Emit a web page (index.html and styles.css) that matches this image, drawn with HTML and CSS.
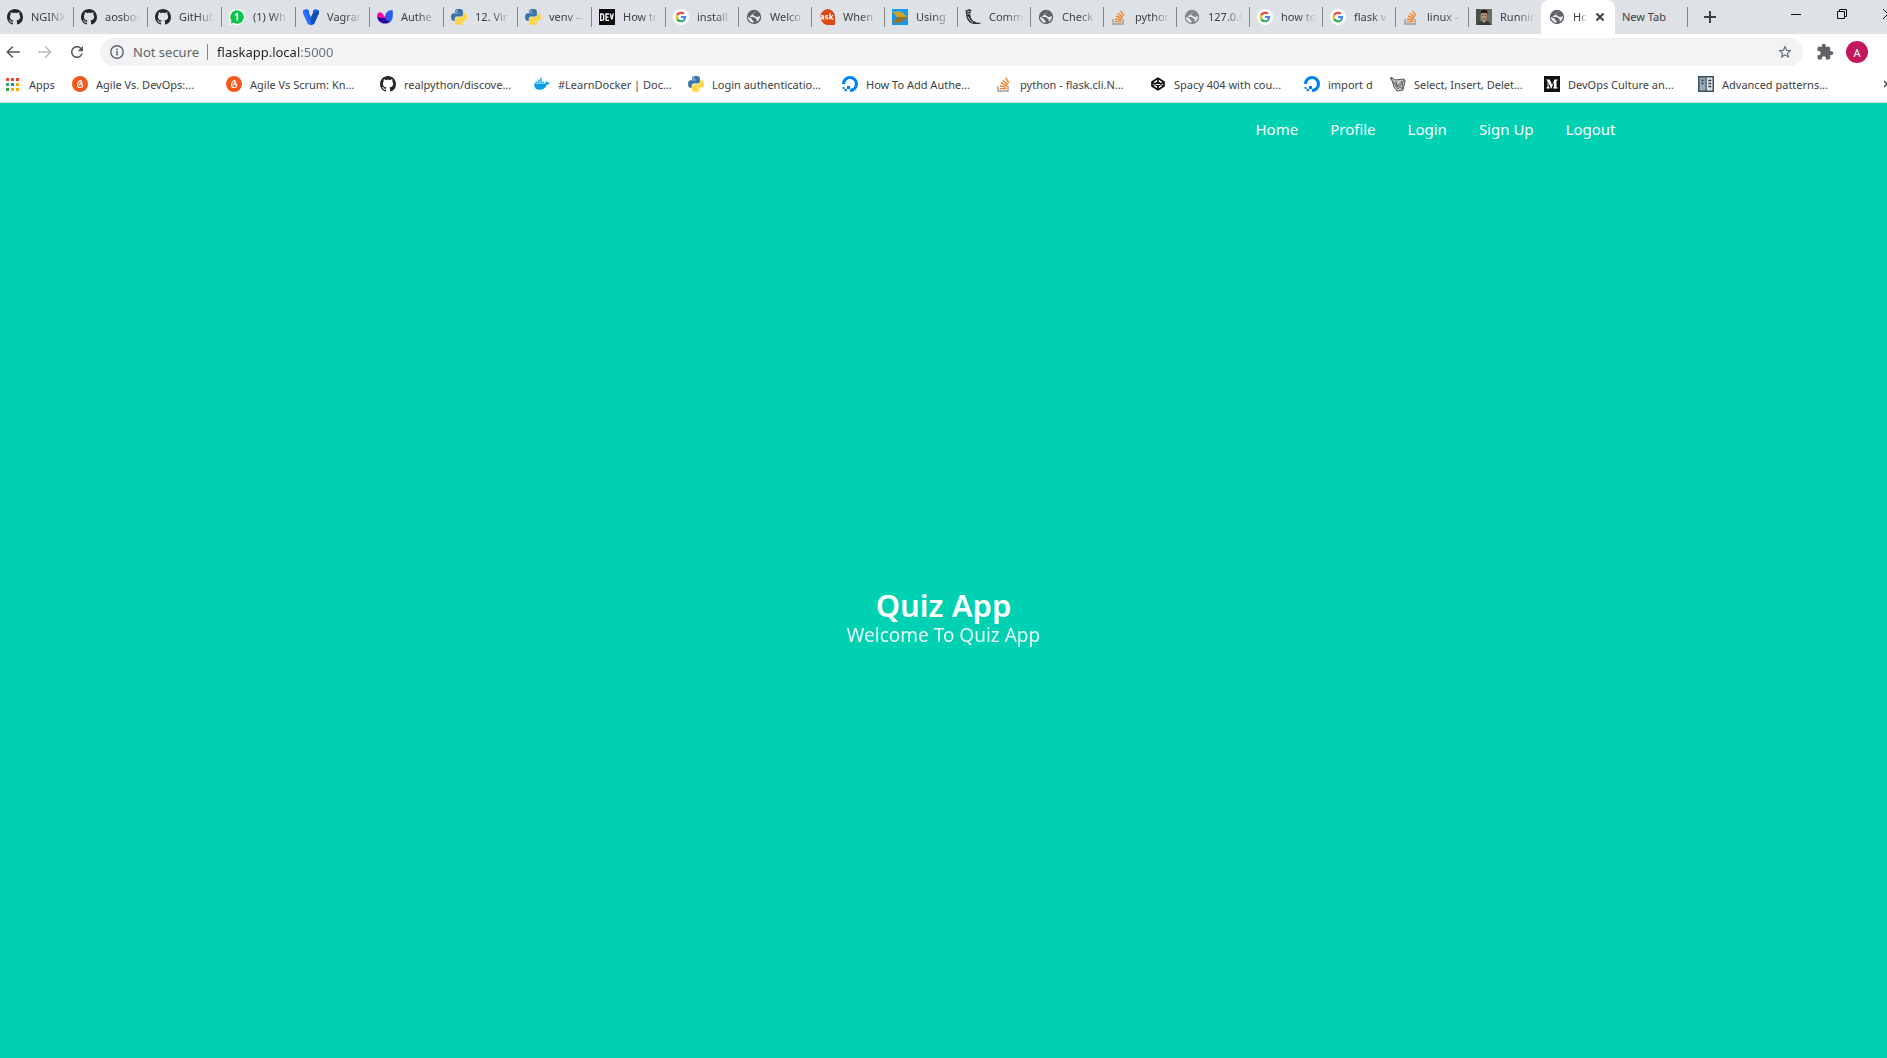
FILE: index.html
```html
<!DOCTYPE html>
<html lang="en">
<head>
<meta charset="utf-8">
<title>Home</title>
<link rel="stylesheet" href="styles.css">
</head>
<body>
<svg class="sprite" aria-hidden="true">
  <symbol id="github" viewBox="0 0 16 16"><path fill="#24292e" d="M8 0C3.58 0 0 3.58 0 8c0 3.54 2.29 6.53 5.47 7.59.4.07.55-.17.55-.38 0-.19-.01-.82-.01-1.49-2.01.37-2.53-.49-2.69-.94-.09-.23-.48-.94-.82-1.13-.28-.15-.68-.52-.01-.53.63-.01 1.08.58 1.23.82.72 1.21 1.87.87 2.33.66.07-.52.28-.87.51-1.07-1.78-.2-3.64-.89-3.64-3.95 0-.87.31-1.59.82-2.15-.08-.2-.36-1.02.08-2.12 0 0 .67-.21 2.2.82.64-.18 1.32-.27 2-.27s1.36.09 2 .27c1.53-1.04 2.2-.82 2.2-.82.44 1.1.16 1.92.08 2.12.51.56.82 1.27.82 2.15 0 3.07-1.87 3.75-3.65 3.95.29.25.54.73.54 1.48 0 1.07-.01 1.93-.01 2.2 0 .21.15.46.55.38A8.01 8.01 0 0 0 16 8c0-4.42-3.58-8-8-8z"/></symbol>
  <symbol id="whatsapp" viewBox="0 0 16 16"><path fill="#fff" d="M8 0a8 8 0 1 1-3.700 15L0 16l1-4.200A8 8 0 0 1 8 0z"/><path fill="#09c44b" d="M8 1.200A6.800 6.800 0 1 1 4.500 13.800L1.700 14.500l.700-2.900A6.800 6.800 0 0 1 8 1.200z"/><path d="M6.300 6 8.300 4.700V11.500" fill="none" stroke="#fff" stroke-width="1.600"/></symbol>
  <symbol id="vagrant" viewBox="0 0 16 16"><path fill="#1563ff" d="M0 1.500 3.500 0 6 1.500V4l2 4.500L10 4V1.500L12.500 0 16 1.500V4l-5 11-3 1-3-1L0 4z"/><path fill="#104eb2" d="M10 4l2.500-1.200L16 1.500V4l-5 11-3 1v-7.500z"/><path fill="#2e71ff" d="M0 1.500 3.500 3l5 12.800L8 16l-3-1L0 4z"/></symbol>
  <symbol id="autho" viewBox="0 0 16 16"><path fill="#2b04a0" d="M.200 7.200 8 8.500l5.500 4C12 14 10 14.600 8 14.500 3.500 14.400.600 11.500.200 7.200z"/><path fill="#ff0aa4" d="M.200 7.800C-.200 5 .800 3.300 3 3.300c2.300 0 3.300 2.200 5.300 5.200C5.500 9.300 2.500 9 .200 7.800z"/><path fill="#2d5bea" d="M8 8.500C8 4 10.500 1.200 15.500 1c.700 4.500.700 9-2 11.700C10.500 12.700 8.500 11 8 8.500z"/></symbol>
  <symbol id="python" viewBox="0 0 16 16"><path fill="#3a74a8" d="M7.900.100C4 .100 4.200 1.800 4.200 1.800v1.900h3.800v.600H2.700S.100 4 .100 8s2.300 3.800 2.300 3.800h1.400V9.900s-.100-2.300 2.200-2.300h3.800s2.100 0 2.100-2.100V2.200S12.200.100 7.900.100zM5.800 1.300a.700.700 0 1 1 0 1.400.700.700 0 0 1 0-1.400z"/><path fill="#ffd43b" d="M8.100 15.900c3.900 0 3.700-1.700 3.700-1.700v-1.900H8v-.600h5.300s2.600.300 2.600-3.700-2.300-3.800-2.300-3.800h-1.400v1.900s.100 2.300-2.200 2.300H6.200s-2.100 0-2.100 2.100v3.300s-.300 2.100 4 2.100zm2.100-1.200a.700.700 0 1 1 0-1.400.700.700 0 0 1 0 1.400z"/></symbol>
  <symbol id="dev" viewBox="0 0 16 16"><path fill="#0a0a0a" d="M0 0h16v16H0z"/><path fill="none" stroke="#fff" stroke-width="1.300" d="M1.700 5v6.300h1.200Q4.700 11.300 4.700 10V6.300Q4.700 5 2.900 5zM10 5H7v6.300h3M7 8.100h2.500M11.300 4.500l1.500 6 1.500-6"/></symbol>
  <symbol id="google" viewBox="-12 -12 72 72"><circle cx="24" cy="24" r="36" fill="#fff"/><path fill="#ea4335" d="M24 9.500c3.540 0 6.710 1.220 9.210 3.600l6.850-6.850C35.900 2.380 30.470 0 24 0 14.620 0 6.510 5.380 2.560 13.220l7.980 6.190C12.430 13.720 17.740 9.500 24 9.500z"/><path fill="#4285f4" d="M46.980 24.550c0-1.570-.15-3.090-.38-4.550H24v9.020h12.940c-.58 2.960-2.260 5.480-4.780 7.180l7.730 6c4.510-4.180 7.090-10.360 7.090-17.650z"/><path fill="#fbbc05" d="M10.530 28.590c-.48-1.450-.76-2.990-.76-4.590s.27-3.140.76-4.590l-7.980-6.190C.92 16.460 0 20.120 0 24s.92 7.540 2.560 10.780l7.970-6.190z"/><path fill="#34a853" d="M24 48c6.480 0 11.930-2.130 15.890-5.810l-7.730-6c-2.150 1.450-4.920 2.300-8.160 2.300-6.260 0-11.570-4.220-13.470-9.910l-7.980 6.190C6.510 42.620 14.620 48 24 48z"/></symbol>
  <symbol id="globe" viewBox="0 0 16 16"><circle cx="8" cy="8" r="7.200" fill="currentColor"/><path fill="#e8eaed" d="M9.800 2.300C8.500 2.600 8 3.300 8.200 4.400c-1.300 0-1.400.900-1.300 1.600 1.900.300 2.200 1.700 3.700 2 1.800.200 2.600-.600 3.400-.900.100 2.200-.900 4.200-2.700 5.300-1-.400-1.200-1.500-.500-2.300-1.500-.200-1.900-1.700-3.400-2.100H2c.100 2.900 2.400 5.500 5.600 5.800V12c-1.400-.300-1.800-1.300-1.500-2.200l-4-1.800c-.100.400 0 .9 0 1.200z"/></symbol>
  <symbol id="ask" viewBox="0 0 16 16"><path fill="#dd4814" d="M8 0a8 8 0 0 1 8 8v8H11A8 8 0 1 1 8 0z"/><path fill="none" stroke="#fff" stroke-width="1.200" d="M2.200 6.600h1.500q.900 0 .900 1V10H3.200Q2 10 2 9.100t1.200-.900h1.400M9 6.700H7.600Q6.500 6.700 6.500 7.500t1.200.900q1.200 0 1.200.800T7.800 10H6.400M11 4.200V10.600M14 6.300 11.400 8.300 14.200 10.500"/></symbol>
  <symbol id="using" viewBox="0 0 16 16"><path fill="#1199f5" d="M0 0h16v16H0z"/><path fill="#d2a12b" d="M0 2.500h9L15.500 8H5z"/><path fill="#8f742b" d="M5 8h10.500L9 14H0z"/></symbol>
  <symbol id="flask" viewBox="0 0 16 16"><path fill="#333" d="M.500 1.500 4.500 0 6.500 1.200 5.200 4Q5 9 8.500 12q2.500 2 7.500 2l-1.500 1H9Q3 14 1.500 8z"/><path stroke="#ddd" fill="none" stroke-width=".800" d="M2 3l3-1M2.200 5l2.500-.500M3 7.500q1 4 5 6"/></symbol>
  <symbol id="stack" viewBox="0 0 16 16"><path fill="none" stroke="#9b9da0" stroke-width="1.400" d="M2 10v5h10v-5"/><path fill="none" stroke="#f48024" stroke-width="1.400" d="M3.800 12.600h6.500M4 10l6.400 1M5 7l6 2.600M6.800 4.200l4.900 4.200M9.600 1.600l3.300 5.300"/></symbol>
  <symbol id="photo" viewBox="0 0 16 16"><path fill="#657066" d="M0 0h16v16H0z"/><path fill="#49504c" d="M0 0h4v16H0z"/><path fill="#343b32" d="M2 16q1-4 5-4.500h3q4 1 5 4.500z"/><path fill="#b88b73" d="M5.200 4h5.600v4.500L9.600 12.500 8 14l-1.700-1.500-1.100-4z"/><path fill="#211e1c" d="M4.500 6V2.500Q5 .500 8 .500t3.500 2V6l-.8-2H5.300z"/><path stroke="#593d34" stroke-width=".800" d="M6 6.500h1.300m1.400 0H10M6.900 10h2.300"/></symbol>
  <symbol id="flame" viewBox="0 0 16 16"><circle cx="8" cy="8" r="8" fill="#f4591b"/><path fill="none" stroke="#fff" stroke-width="1.200" d="M9 4Q5.500 6 5.500 9.300q.300 2.200 2.500 2.200 2.400 0 2.600-1.700T8.800 7.800Q7.200 7.800 7.200 9.200M9 4v2.500l1.500.500"/></symbol>
  <symbol id="docker" viewBox="0 0 16 16"><path fill="#0a9ee8" d="M0 7.500h11.300q1-.700.600-2.800 1.300.700 1.500 1.800 1.500-.300 2.600.500-1 1.500-3 1.500-2 5.300-7.500 5.300Q0 13.800 0 7.500z"/><path fill="#36b3e8" d="M1.300 5.500h2v1.600h-2zM3.600 5.500h2v1.600h-2zM5.900 5.500h2v1.600h-2zM8.200 5.500h2v1.600h-2zM3.600 3.600h2v1.600h-2zM5.900 3.600h2v1.600h-2zM5.900 1.700h2v1.600h-2z"/></symbol>
  <symbol id="ocean" viewBox="0 0 16 16"><path fill="#0080ff" d="M8 16v-3.100a4.900 4.900 0 1 0-4.900-4.900H0A8 8 0 1 1 8 16zM5 9.900h3V13H5zM2.600 13H5v2.300H2.600zM.700 11h1.900v2H.700z"/></symbol>
  <symbol id="codepen" viewBox="0 0 16 16"><path fill="none" stroke="#111" stroke-width="1.700" stroke-linejoin="round" d="M8 2.200 14 6v4L8 13.800 2 10V6zM2 6l6 4 6-4M2 10l6-4 6 4M8 2.200V6M8 10v3.800"/></symbol>
  <symbol id="sketch" viewBox="0 0 16 16"><path fill="#c9c9c9" stroke="#555" stroke-width="1" d="M1 1l4 3 9-1 1 2-2 9-6 1-3-4z"/><path fill="none" stroke="#666" stroke-width="1" d="M0 2l8 11M3 6l10 7M6 5l1 6 5-6 1 8M14 4 8 13"/></symbol>
  <symbol id="medium" viewBox="0 0 16 16"><path fill="#111" d="M0 0h16v16H0z"/><path fill="#fff" d="M2.500 3.500h3.200L8.200 9l2.200-5.500h3.100v.700l-1 .700v6.200l1 .700v.700H9v-.700l1-.700V6L7.500 12.500H7L4.500 6.500v4l1.200 1.300v.700H2.500v-.700l1.100-1.300V4.900l-1.100-.700z"/></symbol>
  <symbol id="book" viewBox="0 0 16 16"><path fill="#3d4f5d" d="M0 0h16v16H0z"/><path fill="#93a8b8" d="M1.500 1.500h6v13h-6z"/><path fill="#dce7ee" d="M8.700 1.500h5.800v13H8.700z"/><path stroke="#2b3944" stroke-width="1.300" d="M3.500 4.500h2M3.500 7.500h2M10.300 4.500h3M10.300 7.500h3M10.300 10.500h3"/></symbol>
</svg>

<header class="browser">
  <div class="tab-strip">
    <div class="tabs" role="tablist">
      <button class="tab" role="tab"><svg><use href="#github"/></svg><span>NGINX</span></button>
      <button class="tab" role="tab"><svg><use href="#github"/></svg><span>aosboo</span></button>
      <button class="tab" role="tab"><svg><use href="#github"/></svg><span>GitHub</span></button>
      <button class="tab" role="tab"><svg><use href="#whatsapp"/></svg><span>(1) Wh</span></button>
      <button class="tab" role="tab"><svg><use href="#vagrant"/></svg><span>Vagran</span></button>
      <button class="tab" role="tab"><svg><use href="#autho"/></svg><span>Authe</span></button>
      <button class="tab" role="tab"><svg><use href="#python"/></svg><span>12. Vir</span></button>
      <button class="tab" role="tab"><svg><use href="#python"/></svg><span>venv —</span></button>
      <button class="tab" role="tab"><svg><use href="#dev"/></svg><span>How to</span></button>
      <button class="tab" role="tab"><svg><use href="#google"/></svg><span>install</span></button>
      <button class="tab" role="tab"><svg><use href="#globe"/></svg><span>Welco</span></button>
      <button class="tab" role="tab"><svg><use href="#ask"/></svg><span>When</span></button>
      <button class="tab" role="tab"><svg><use href="#using"/></svg><span>Using</span></button>
      <button class="tab" role="tab"><svg><use href="#flask"/></svg><span>Comm</span></button>
      <button class="tab" role="tab"><svg><use href="#globe"/></svg><span>Check</span></button>
      <button class="tab" role="tab"><svg><use href="#stack"/></svg><span>python</span></button>
      <button class="tab" role="tab"><svg class="dim"><use href="#globe"/></svg><span>127.0.0</span></button>
      <button class="tab" role="tab"><svg><use href="#google"/></svg><span>how to</span></button>
      <button class="tab" role="tab"><svg><use href="#google"/></svg><span>flask v</span></button>
      <button class="tab" role="tab"><svg><use href="#stack"/></svg><span>linux -</span></button>
      <button class="tab last" role="tab"><svg><use href="#photo"/></svg><span>Runnin</span></button>
      <div class="tab active" role="tab" aria-selected="true"><svg><use href="#globe"/></svg><span>Ho</span>
        <button class="close" aria-label="Close tab"><svg viewBox="0 0 10 10"><path d="M1.500 1.500l7 7M8.500 1.500l-7 7" stroke="#3c4043" stroke-width="2"/></svg></button></div>
      <button class="tab" role="tab"><span class="wide">New Tab</span></button>
    </div>
    <button class="new-tab" aria-label="New tab"><svg viewBox="0 0 12 12"><path d="M6 0v12M0 6h12" stroke="#3c4043" stroke-width="2"/></svg></button>
    <div class="window-controls">
      <button aria-label="Minimize"><svg viewBox="0 0 10 10"><path d="M0 5.500h10" stroke="#111"/></svg></button>
      <button aria-label="Restore"><svg viewBox="0 0 10 10"><path d="M.500 2.500h7v7h-7zM2.500 2.500v-2h7v7h-2" fill="none" stroke="#111"/></svg></button>
      <button aria-label="Close"><svg viewBox="0 0 10 10"><path d="M0 0l10 10M10 0L0 10" stroke="#111"/></svg></button>
    </div>
  </div>

  <div class="toolbar">
    <button class="tool" aria-label="Back"><svg viewBox="0 0 24 24"><path fill="#54585d" d="M21 11H6.830l5.590-5.590L11 4l-8 8 8 8 1.410-1.410L6.830 13H21z"/></svg></button>
    <button class="tool" aria-label="Forward"><svg viewBox="0 0 24 24"><path fill="#bababa" d="M3 11h14.170l-5.590-5.590L13 4l8 8-8 8-1.410-1.410L17.170 13H3z"/></svg></button>
    <button class="tool" aria-label="Reload"><svg viewBox="0 0 24 24"><path fill="#54585d" d="M17.650 6.350C16.200 4.900 14.210 4 12 4c-4.420 0-7.990 3.580-7.990 8s3.570 8 7.990 8c3.730 0 6.840-2.550 7.730-6h-2.080c-.82 2.330-3.040 4-5.650 4-3.310 0-6-2.690-6-6s2.690-6 6-6c1.660 0 3.140.69 4.220 1.780L13 11h7V4l-2.350 2.350z"/></svg></button>
    <div class="omnibox">
      <svg class="info" viewBox="0 0 14 14"><circle cx="7" cy="7" r="6.200" fill="none" stroke="#5f6368" stroke-width="1.400"/><path d="M7 6v4.500M7 3.500V5" stroke="#5f6368" stroke-width="1.500"/></svg>
      <label class="security" for="address">Not secure</label>
      <input class="address" id="address" type="text" value="flaskapp.local:5000">
      <button class="star" aria-label="Bookmark this page"><svg viewBox="0 0 24 24"><path fill="#5f6368" d="M22 9.240l-7.190-.62L12 2 9.190 8.630 2 9.240l5.460 4.730L5.820 21 12 17.270 18.180 21l-1.630-7.030L22 9.240zM12 15.400l-3.760 2.270 1-4.280-3.320-2.880 4.380-.38L12 6.100l1.710 4.040 4.380.38-3.320 2.880 1 4.280L12 15.400z"/></svg></button>
    </div>
    <button class="extensions" aria-label="Extensions"><svg viewBox="0 0 24 24"><path fill="#5f6368" d="M20.500 11H19V7c0-1.100-.9-2-2-2h-4V3.500C13 2.120 11.880 1 10.500 1S8 2.120 8 3.500V5H4c-1.100 0-1.990.9-1.990 2v3.800H3.500c1.490 0 2.700 1.210 2.700 2.700s-1.210 2.700-2.700 2.700H2V20c0 1.100.9 2 2 2h3.800v-1.500c0-1.490 1.210-2.700 2.700-2.700 1.490 0 2.700 1.210 2.700 2.700V22H17c1.100 0 2-.9 2-2v-4h1.500c1.380 0 2.500-1.120 2.500-2.500S21.880 11 20.500 11z"/></svg></button>
    <button class="avatar">A</button>
  </div>

  <nav class="bookmarks" aria-label="Bookmarks">
    <a class="apps" href="#"><svg viewBox="0 0 13 13"><path fill="#ea4335" d="M0 0h3v3H0zM5 0h3v3H5zM10 0h3v3h-3z"/><path fill="#34a853" d="M0 5h3v3H0zM0 10h3v3H0z"/><path fill="#1a85f0" d="M5 5h3v3H5z"/><path fill="#f9ab00" d="M10 5h3v3h-3zM5 10h3v3H5zM10 10h3v3h-3z"/></svg>Apps</a>
    <a href="#"><svg><use href="#flame"/></svg>Agile Vs. DevOps:...</a>
    <a href="#"><svg><use href="#flame"/></svg>Agile Vs Scrum: Kn...</a>
    <a href="#"><svg><use href="#github"/></svg>realpython/discove...</a>
    <a href="#"><svg><use href="#docker"/></svg>#LearnDocker | Doc...</a>
    <a href="#"><svg><use href="#python"/></svg>Login authenticatio...</a>
    <a href="#"><svg><use href="#ocean"/></svg>How To Add Authe...</a>
    <a href="#"><svg><use href="#stack"/></svg>python - flask.cli.N...</a>
    <a href="#"><svg><use href="#codepen"/></svg>Spacy 404 with cou...</a>
    <a class="short" href="#"><svg><use href="#ocean"/></svg>import d</a>
    <a href="#"><svg><use href="#sketch"/></svg>Select, Insert, Delet...</a>
    <a href="#"><svg><use href="#medium"/></svg>DevOps Culture an...</a>
    <a href="#"><svg><use href="#book"/></svg>Advanced patterns...</a>
    <button class="more" aria-label="More bookmarks"><svg viewBox="0 0 8 8"><path d="M0 1l3 3-3 3M4 1l3 3-3 3" fill="none" stroke="#3c4043" stroke-width="1.500"/></svg></button>
  </nav>
</header>

<main class="hero">
  <nav class="site-nav">
    <a href="#">Home</a>
    <a href="#">Profile</a>
    <a href="#">Login</a>
    <a href="#">Sign Up</a>
    <a href="#">Logout</a>
  </nav>
  <div class="hero-body">
    <h1>Quiz App</h1>
    <p>Welcome To Quiz App</p>
  </div>
</main>
</body>
</html>
```
FILE: styles.css
```css
* { box-sizing: border-box; }

body {
  margin: 0;
  min-height: 100vh;
  display: flex;
  flex-direction: column;
  overflow-x: hidden;
  font-family: "Noto Sans", "Open Sans", sans-serif;
  color: #3c4043;
}

button {
  font: inherit;
  color: inherit;
  border: 0;
  padding: 0;
  background: none;
}

a { color: inherit; text-decoration: none; }
svg { display: block; flex: none; }
.sprite { width: 0; height: 0; position: absolute; }

.browser {
  background: #fff;
  font-size: 11px;
  border-bottom: 1px solid #d5d8dc;
  overflow: hidden;
}

/* Tab strip */
.tab-strip {
  display: flex;
  align-items: center;
  height: 34px;
  background: #dee1e6;
}

.tabs { display: flex; flex: none; height: 34px; }

.tab {
  position: relative;
  display: flex;
  align-items: center;
  gap: 8px;
  flex: none;
  width: 73px;
  padding-left: 7px;
}

.tab:nth-child(-n+9) { width: 74px; }
.tab svg { width: 16px; height: 16px; color: #5f6368; }
.tab .dim { color: #858688; }

.tab::after {
  content: "";
  position: absolute;
  right: 0;
  top: 7px;
  width: 1px;
  height: 20px;
  background: #84878b;
}

.tab span {
  width: 35px;
  padding-bottom: 2px;
  overflow: hidden;
  white-space: nowrap;
  text-align: left;
  mask-image: linear-gradient(to right, #000 50%, transparent);
}

.tab .wide { width: 58px; mask-image: none; }
.tab.last::after, .tab.active::after { display: none; }
.tab.last { width: 72px; }

.tab.active {
  width: 74px;
  background: #fff;
  border-radius: 8px 8px 0 0;
  padding-left: 8px;
}

.tab.active span { width: 14px; }
.tab .close svg { width: 10px; height: 10px; }

.new-tab { margin-left: 16px; }
.new-tab svg { width: 12px; height: 12px; }

.window-controls {
  display: flex;
  gap: 36px;
  margin-left: auto;
  margin-right: -6px;
  padding-bottom: 6px;
}

.window-controls svg { width: 10px; height: 10px; }

/* Toolbar */
.toolbar {
  display: flex;
  align-items: center;
  height: 36px;
  padding: 0 19px 0 4px;
}

.tool { margin-right: 14px; }
.tool svg, .extensions svg { width: 18px; height: 18px; }

.omnibox {
  display: flex;
  align-items: center;
  flex: 1;
  height: 28px;
  padding: 0 10px;
  border-radius: 14px;
  background: #f1f3f4;
  font-size: 13px;
}

.info { width: 14px; height: 14px; }

.security {
  margin-left: 9px;
  padding-right: 8px;
  border-right: 1px solid #85888b;
  line-height: 16px;
  color: #5f6368;
}

/* Host name is darker than the port that follows it */
.address {
  flex: 1;
  min-width: 0;
  border: 0;
  padding: 0 0 0 9px;
  font: inherit;
  color: transparent;
  background: linear-gradient(to right, #202124 91px, #6b6f73 91px);
  background-clip: text;
}

.star svg { width: 16px; height: 16px; }
.extensions { margin-left: 13px; }

.avatar {
  width: 22px;
  height: 22px;
  margin-left: 12px;
  border-radius: 50%;
  background: #c2185b;
  color: #fff;
}

/* Bookmarks */
.bookmarks {
  display: flex;
  align-items: center;
  height: 32px;
  padding: 0 1px 4px 6px;
}

.bookmarks a {
  display: flex;
  align-items: center;
  flex: none;
  gap: 8px;
  width: 154px;
  white-space: nowrap;
}

.bookmarks a svg { width: 16px; height: 16px; }
.bookmarks .apps { width: 66px; gap: 10px; }
.bookmarks .apps svg { width: 13px; height: 13px; }
.bookmarks .short { width: 86px; }
.more { margin-left: auto; margin-right: -6px; }
.more svg { width: 8px; height: 8px; }

/* Page */
.hero {
  flex: 1;
  display: flex;
  flex-direction: column;
  background: #00d1b2;
  color: #fff;
}

.site-nav {
  display: flex;
  justify-content: flex-end;
  align-items: center;
  gap: 32px;
  width: 100%;
  max-width: 1344px;
  height: 52px;
  margin: 0 auto;
  font-size: 15px;
}

.hero-body {
  flex: 1;
  display: flex;
  flex-direction: column;
  align-items: center;
  justify-content: center;
  padding-top: 20px;
}

.hero-body h1 {
  margin: 0;
  font-size: 31px;
  font-weight: 600;
  line-height: 36px;
}

.hero-body p {
  margin: 0;
  font-size: 19px;
  line-height: 24px;
  opacity: 0.9;
}
```
